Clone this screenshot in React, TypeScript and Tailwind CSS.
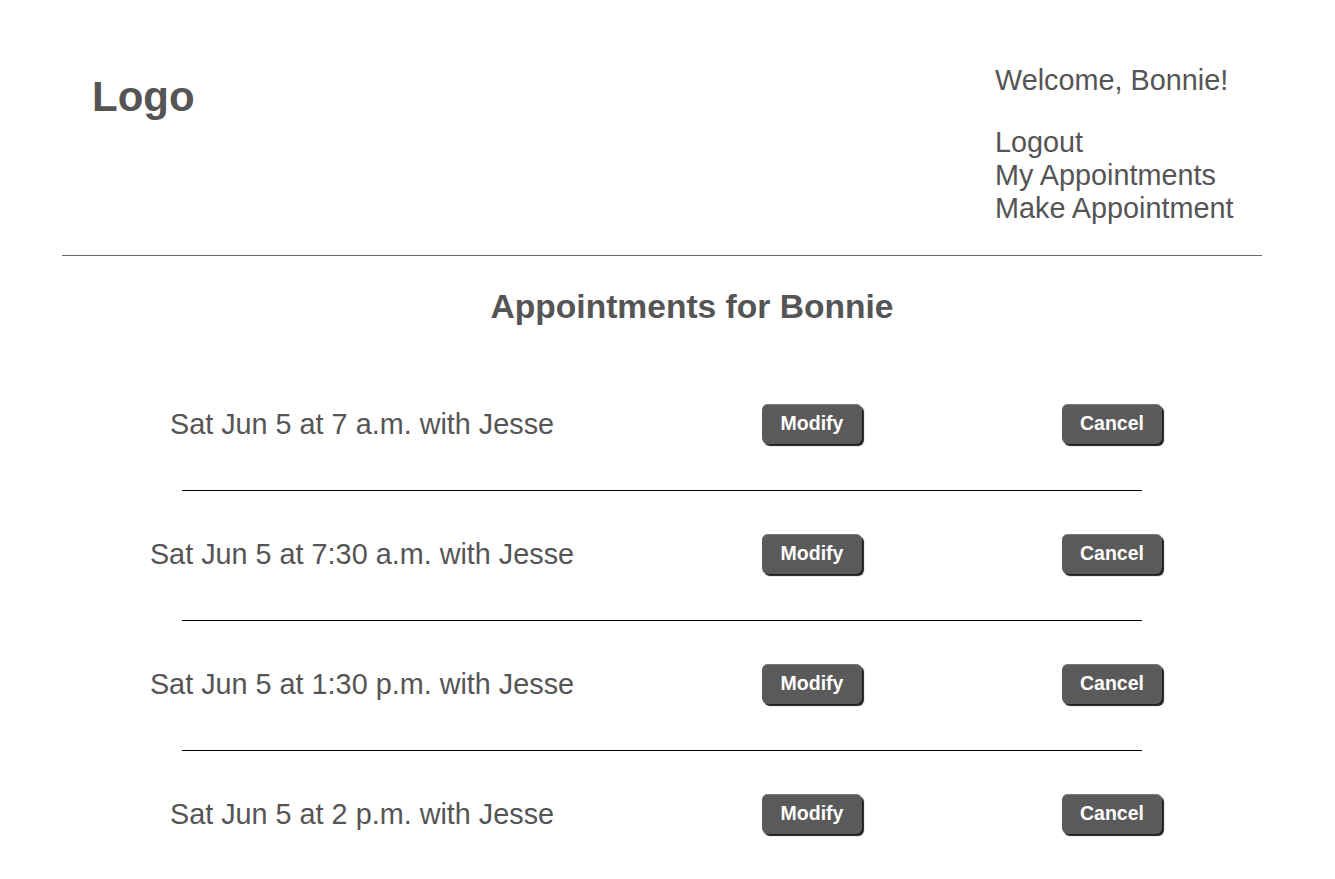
import React from 'react';

const appointments = [
  'Sat Jun 5 at 7 a.m. with Jesse',
  'Sat Jun 5 at 7:30 a.m. with Jesse',
  'Sat Jun 5 at 1:30 p.m. with Jesse',
  'Sat Jun 5 at 2 p.m. with Jesse',
];

const ActionButton: React.FC<{ label: string }> = ({ label }) => (
  <button className="w-[100px] h-[40px] rounded-[6px] bg-[#5a5a5a] text-white font-bold text-[19.5px] leading-none shadow-[inset_0_1px_0_#7c7c7c,2px_2px_1px_#1e1e1e]">
    {label}
  </button>
);

export default function App() {
  return (
    <div className="min-h-screen bg-white text-[#555] font-['Liberation_Sans',Arial,sans-serif]">
      <div className="w-[1200px] ml-[62px]">
        {/* Header */}
        <header className="flex justify-between items-start pt-[64px] pb-[30px] border-b border-[#6a6a6a]">
          <div className="pl-[30px] mt-[12px] text-[42px] font-bold leading-none">Logo</div>
          <nav className="w-[267px] text-[28.8px] leading-[33px]">
            <p className="mb-[29px]">Welcome, Bonnie!</p>
            <ul>
              <li><a href="#">Logout</a></li>
              <li><a href="#">My Appointments</a></li>
              <li><a href="#">Make Appointment</a></li>
            </ul>
          </nav>
        </header>

        <h2 className="mt-[31px] pl-[60px] text-center text-[33.6px] font-bold leading-[40px]">
          Appointments for Bonnie
        </h2>

        {/* Appointment list */}
        <div className="mt-[34px]">
          {appointments.map((text, idx) => (
            <div key={idx}>
              <div className="grid grid-cols-[600px_300px_300px] items-center h-[129px]">
                <div className="text-center text-[28.8px] leading-[33px] mb-[2px]">{text}</div>
                <div className="flex justify-center mb-[4px]"><ActionButton label="Modify" /></div>
                <div className="flex justify-center mb-[4px]"><ActionButton label="Cancel" /></div>
              </div>
              {idx < appointments.length - 1 && <div className="w-[960px] mx-auto h-px bg-black" />}
            </div>
          ))}
        </div>
      </div>
    </div>
  );
}
